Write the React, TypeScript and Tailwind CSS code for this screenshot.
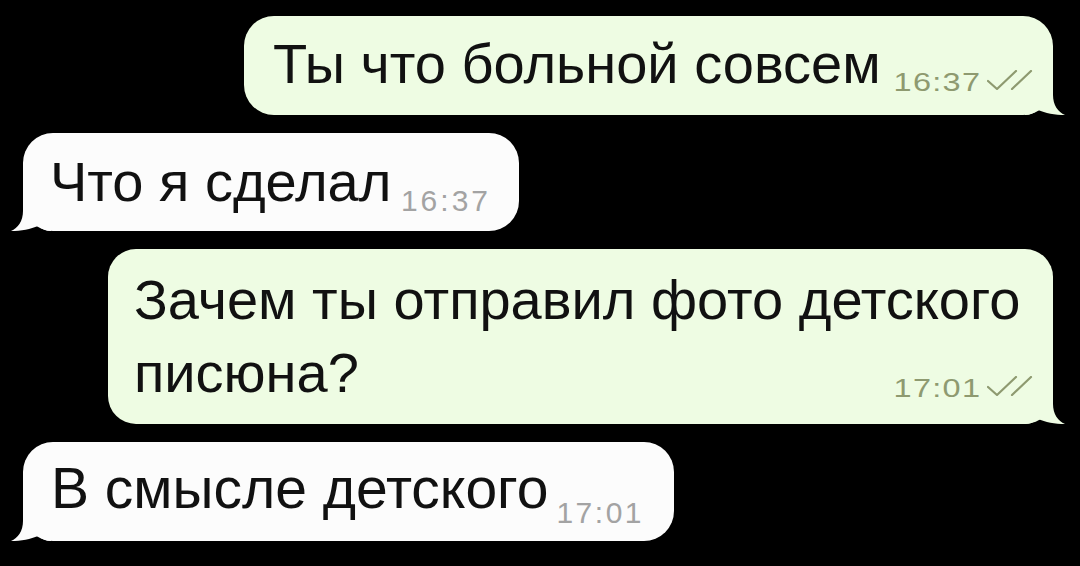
import React from "react";

const OUT_BG = "#eefce3";
const IN_BG = "#fcfcfc";

const Checks = () => (
  <svg width="46" height="20" viewBox="0 0 46 20" fill="none" stroke="#8e9a70" strokeWidth="2.2" strokeLinecap="round" strokeLinejoin="round">
    <path d="M1 11 L10 19 L29 1" />
    <path d="M25 19 L44 1" />
  </svg>
);

const TailRight = () => (
  <svg className="absolute right-[-12px] bottom-0" width="40" height="36" viewBox="0 0 40 36">
    <path d="M0 0 L28 0 L28 16 C28 26 33 33 40 36 C30 36 20 34 13 31 C9 34 5 36 0 36 Z" fill={OUT_BG} />
  </svg>
);

const TailLeft = () => (
  <svg className="absolute left-[-12px] bottom-0" width="40" height="36" viewBox="0 0 40 36">
    <path d="M40 0 L12 0 L12 16 C12 26 7 33 0 36 C10 36 20 34 27 31 C31 34 35 36 40 36 Z" fill={IN_BG} />
  </svg>
);

export default function App() {
  return (
    <div className="flex h-[566px] w-[1080px] flex-col gap-[18px] overflow-hidden bg-black pt-[16px] font-['Liberation_Sans',Arial,sans-serif] text-[#111]">
      {/* 1 outgoing */}
      <div className="flex justify-end pr-[27px]">
        <div className="relative flex h-[99px] w-[809px] items-start justify-between rounded-[30px] bg-[#eefce3] pl-[29px] pr-[20px] pt-[16px]">
          <span className="whitespace-nowrap text-[56px] leading-[64px]">Ты что больной совсем</span>
          <div className="mt-[38px] flex items-start">
            <span className="inline-block origin-right scale-x-[1.3] pr-[4px] text-[25px] leading-[25px] tracking-[1px] text-[#8e9a70]">16:37</span>
            <Checks />
          </div>
          <TailRight />
        </div>
      </div>

      {/* 2 incoming */}
      <div className="flex justify-start pl-[23px]">
        <div className="relative flex h-[98px] w-[496px] items-start justify-between rounded-[30px] bg-[#fcfcfc] pl-[27px] pr-[28px] pt-[17px]">
          <span className="whitespace-nowrap text-[56px] leading-[64px]">Что я сделал</span>
          <span className="mt-[36px] text-[30px] leading-[30px] tracking-[3px] text-[#a3a3a3]">16:37</span>
          <TailLeft />
        </div>
      </div>

      {/* 3 outgoing, two lines */}
      <div className="flex justify-end pr-[27px]">
        <div className="relative grid h-[175px] w-[945px] rounded-[28px] bg-[#eefce3] pl-[26px] pr-[20px] pt-[14px]">
          <p className="col-start-1 row-start-1 whitespace-nowrap text-[56px] leading-[73px]">
            Зачем ты отправил фото детского
            <br />
            писюна?
          </p>
          <div className="col-start-1 row-start-1 mt-[113px] flex items-start self-start justify-self-end">
            <span className="inline-block origin-right scale-x-[1.3] pr-[4px] text-[25px] leading-[25px] tracking-[1px] text-[#8e9a70]">17:01</span>
            <Checks />
          </div>
          <TailRight />
        </div>
      </div>

      {/* 4 incoming */}
      <div className="flex justify-start pl-[23px]">
        <div className="relative flex h-[99px] w-[651px] items-start justify-between rounded-[30px] bg-[#fcfcfc] pl-[28px] pr-[30px] pt-[14px]">
          <span className="whitespace-nowrap text-[57px] leading-[64px]">В смысле детского</span>
          <span className="mt-[42px] text-[30px] leading-[30px] tracking-[2.5px] text-[#a3a3a3]">17:01</span>
          <TailLeft />
        </div>
      </div>
    </div>
  );
}
